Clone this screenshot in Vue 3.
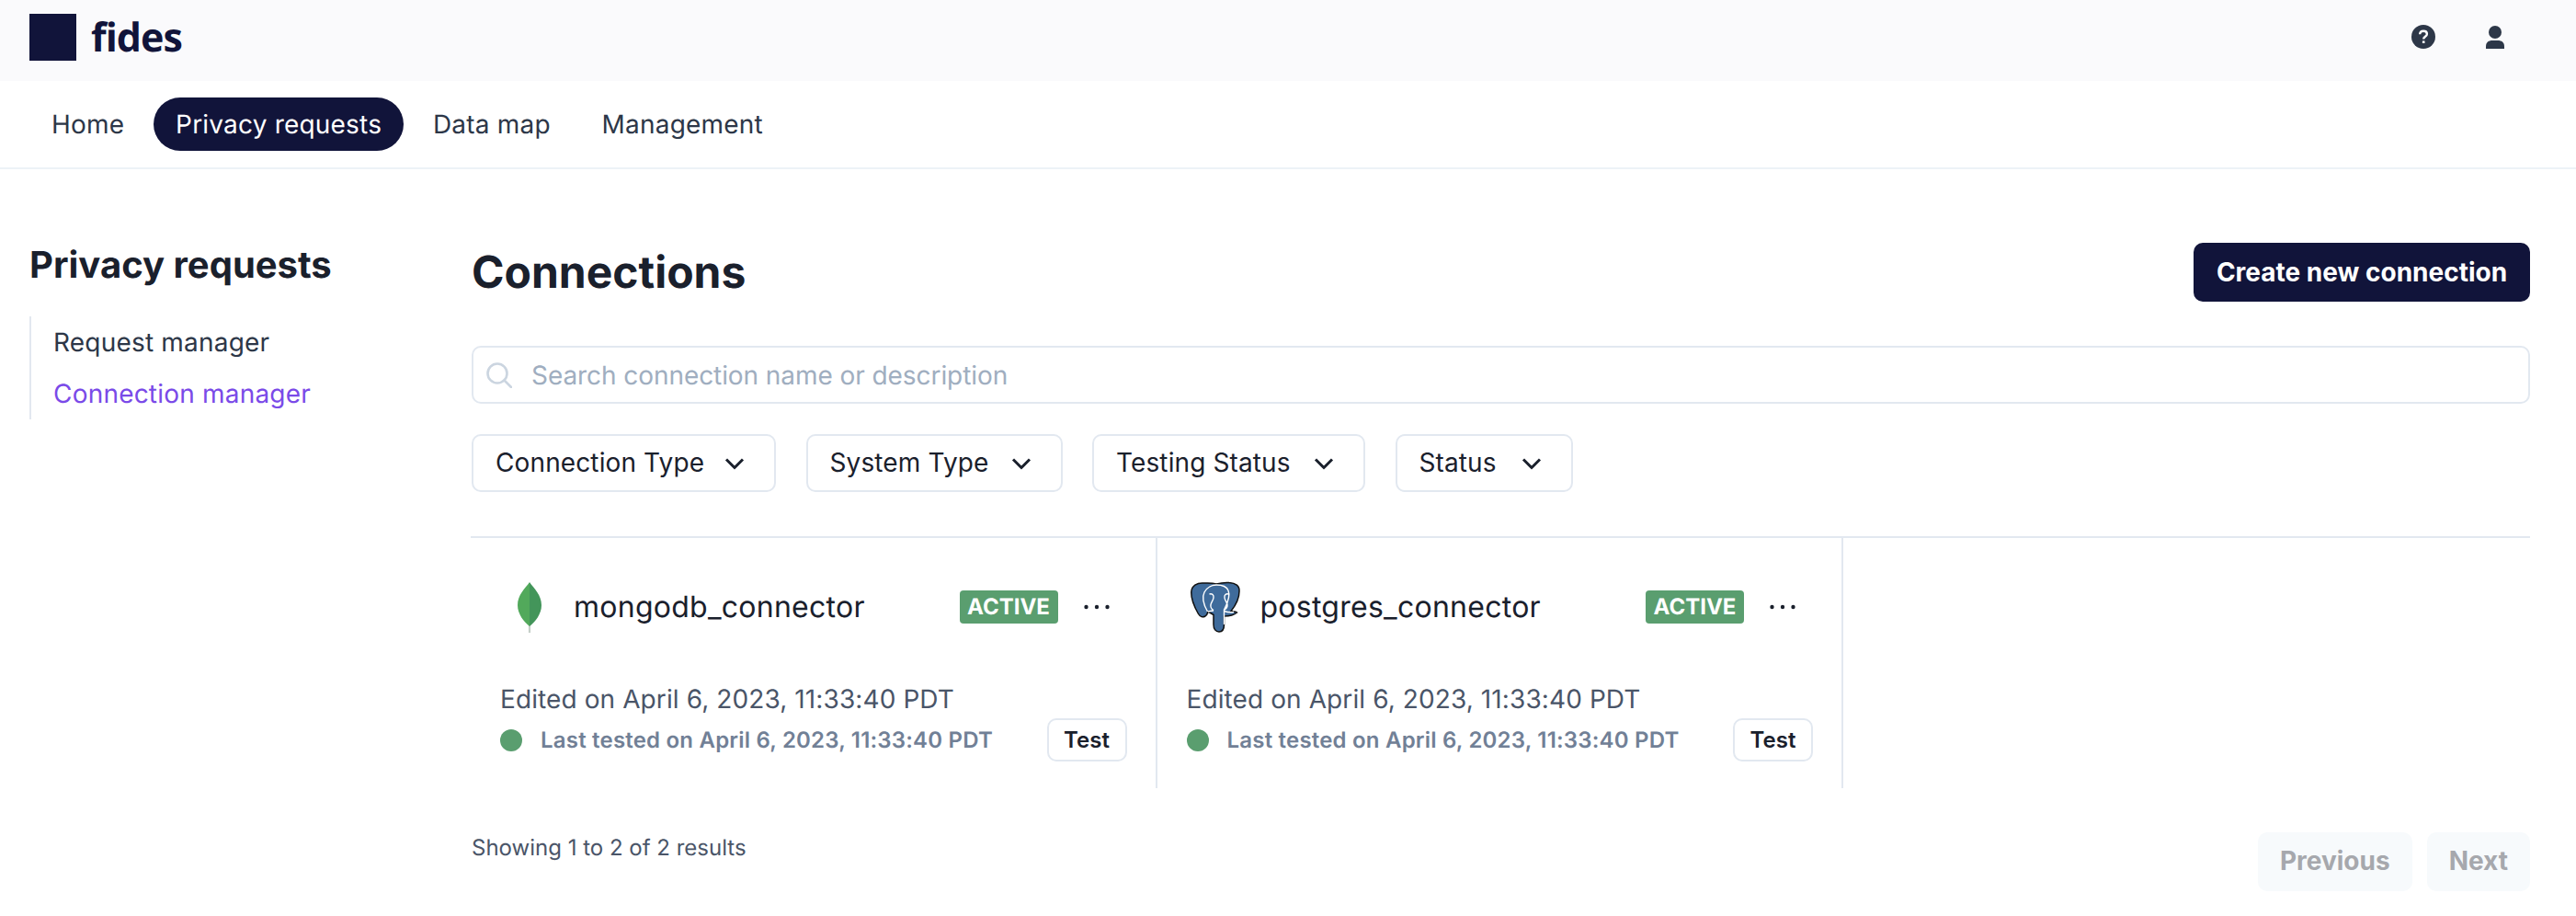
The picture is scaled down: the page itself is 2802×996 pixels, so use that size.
<script setup>
const navItems = [
  { label: 'Home', active: false },
  { label: 'Privacy requests', active: true },
  { label: 'Data map', active: false },
  { label: 'Management', active: false },
]
const filters = [
  { label: 'Connection Type', width: 331 },
  { label: 'System Type', width: 279 },
  { label: 'Testing Status', width: 297 },
  { label: 'Status', width: 193 },
]
const cards = [
  { name: 'mongodb_connector', kind: 'mongo' },
  { name: 'postgres_connector', kind: 'pg' },
]
</script>

<template>
  <div class="page">
    <header class="top">
      <div class="brand">
        <span class="logo"></span>
        <span class="wordmark">fides</span>
      </div>
      <div class="top-icons">
        <svg class="help" viewBox="0 0 26 26" width="26" height="26" aria-hidden="true">
          <circle cx="13" cy="13" r="13" fill="#2d3748" />
          <path d="M9.2 10.2c0-2.2 1.7-3.5 3.9-3.5s3.8 1.2 3.8 3.2c0 2.9-3.7 2.9-3.7 5.6" fill="none" stroke="#fff" stroke-width="2.4" />
          <rect x="11.9" y="17.4" width="2.6" height="2.6" fill="#fff" />
        </svg>
        <svg class="user" viewBox="0 0 20 25" width="20" height="25" aria-hidden="true">
          <circle cx="10" cy="7" r="7" fill="#2d3748" />
          <path d="M0 25v-2.5C0 18 3 16 7 16h6c4 0 7 2 7 6.500V25z" fill="#2d3748" />
        </svg>
      </div>
    </header>

    <nav class="nav">
      <a v-for="item in navItems" :key="item.label" class="nav-item" :class="{ active: item.active }">{{ item.label }}</a>
    </nav>

    <div class="body">
      <aside class="side">
        <h2 class="side-title">Privacy requests</h2>
        <ul class="side-list">
          <li>Request manager</li>
          <li class="current">Connection manager</li>
        </ul>
      </aside>

      <main class="main">
        <div class="head">
          <h1>Connections</h1>
          <button class="primary">Create new connection</button>
        </div>

        <div class="search">
          <svg viewBox="0 0 28 28" width="28" height="28" aria-hidden="true">
            <circle cx="12" cy="12" r="10.500" fill="none" stroke="#cbd5e0" stroke-width="2.600" />
            <path d="M19.500 19.500L27 27" stroke="#cbd5e0" stroke-width="2.600" stroke-linecap="round" />
          </svg>
          <span>Search connection name or description</span>
        </div>

        <div class="filters">
          <button v-for="f in filters" :key="f.label" class="filter" :style="{ width: f.width + 'px' }">
            <span class="filter-label">{{ f.label }}</span>
            <svg viewBox="0 0 22 14" width="22" height="14" aria-hidden="true">
              <path d="M2 2.500l9 9 9-9" fill="none" stroke="#1a202c" stroke-width="3" />
            </svg>
          </button>
        </div>

        <div class="cards">
          <section v-for="c in cards" :key="c.name" class="card">
            <div class="card-top">
              <span class="icon-slot">
                <svg v-if="c.kind === 'mongo'" viewBox="0 0 26 55" width="26" height="55" aria-hidden="true">
                  <path d="M13 46v9" stroke="#c5cfc9" stroke-width="2.200" />
                  <path d="M13 0C8 7 0 14 0 25c0 10 7 18 13 23z" fill="#52a95b" />
                  <path d="M13 0c5 7 13 14 13 25 0 10-7 18-13 23z" fill="#43955a" />
                </svg>
                <svg v-else viewBox="0 0 56 56" width="56" height="56" aria-hidden="true">
                  <path d="M15 2C8 1.500 2 5 1.800 12c-.2 8 4 17 7.700 23.500 2 3.500 5 4 7.500 2.500 1.500-1 2.500-3 3-5l6 3.500V47c0 5 2.500 8 6 8 4 0 5.500-3 5.500-8V38c5 0 10-.5 14-4-2-1.500-4.500-.5-6.500-1.500 4-5 9-13.500 9-21.500C54.500 5 50 2 43 1.500c-5-.5-10 .5-14 1.500C24 1.500 20 2 15 2z" fill="#3f6b9b" stroke="#111" stroke-width="1.500" />
                  <path d="M19.500 33c-4-7-6.500-15-3.500-21 3-6 9-8 13-8 5 0 11 1 13 6 3 7-2 16-4.500 21V47M21.500 14c3-1 5 1 4.500 4-.5 3-2.500 5-3 7.500-.5 2.500.5 4.500 3 6M42.500 14c-3-1-5 1-4.500 4 .5 3 2.500 5 3 7.500.4 2.500-1.500 4.500-3.500 6M37.500 32.500c3 1 7 1.500 10.500 1M20 33c2-.5 4-1 6-1" fill="none" stroke="#fff" stroke-width="1.400" />
                </svg>
              </span>
              <span class="name">{{ c.name }}</span>
              <span class="badge">ACTIVE</span>
              <svg class="dots" viewBox="0 0 28 6" width="28" height="6" aria-hidden="true">
                <circle cx="2.500" cy="3" r="2.200" fill="#1a202c" />
                <circle cx="14" cy="3" r="2.200" fill="#1a202c" />
                <circle cx="25.500" cy="3" r="2.200" fill="#1a202c" />
              </svg>
            </div>
            <p class="edited">Edited on April 6, 2023, 11:33:40 PDT</p>
            <div class="tested">
              <span class="status-dot"></span>
              <span class="tested-text">Last tested on April 6, 2023, 11:33:40 PDT</span>
              <button class="test">Test</button>
            </div>
          </section>
        </div>

        <div class="foot">
          <span class="count">Showing 1 to 2 of 2 results</span>
          <div class="pager">
            <button class="page-btn">Previous</button>
            <button class="page-btn">Next</button>
          </div>
        </div>
      </main>
    </div>
  </div>
</template>

<style>
html, body { margin: 0; background: #fff; overflow: hidden; }
</style>

<style scoped>
.page { width: 2802px; height: 996px; font-family: Inter, "Liberation Sans", sans-serif; color: #1a202c; background: #fff; text-rendering: geometricPrecision; }
.top { height: 88px; box-sizing: border-box; padding: 0 78px 8px 32px; background: #fafafc; display: flex; align-items: center; justify-content: space-between; }
.brand { display: flex; align-items: center; gap: 16px; }
.logo { width: 51px; height: 51px; background: #11143a; display: block; }
.wordmark { font-family: "Open Sans", sans-serif; font-weight: 700; font-size: 43px; line-height: 50px; letter-spacing: -1px; color: #11143a; }
.top-icons { display: flex; align-items: center; gap: 55px; }
.top-icons svg { display: block; }
.nav { height: 96px; box-sizing: border-box; border-bottom: 2px solid #edf2f7; padding: 18px 0 0 32px; display: flex; gap: 7.800px; align-items: flex-start; }
.nav-item { height: 58px; padding: 0 24px; display: flex; align-items: center; border-radius: 29px; font-size: 28px; letter-spacing: .2px; color: #2d3748; }
.nav-item.active { background: #11143a; color: #fff; }
.body { display: grid; grid-template-columns: 481px 1fr; padding: 78px 50px 0 32px; }
.side-title { margin: 0; font-size: 40px; line-height: 52px; font-weight: 700; color: #1a202c; }
.side-list { margin: 30px 0 0; padding: 0 0 0 24px; list-style: none; border-left: 2px solid #e2e8f0; height: 112px; box-sizing: border-box; }
.side-list li { font-size: 28px; line-height: 56px; letter-spacing: .2px; color: #2d3748; }
.side-list li.current { color: #7a4ae8; }
.main { padding-top: 2px; }
.head { display: flex; align-items: center; justify-content: space-between; height: 64px; }
h1 { margin: 0; padding-bottom: 2px; font-size: 48px; font-weight: 700; color: #1a202c; }
button { font-family: inherit; cursor: pointer; }
.primary { height: 64px; width: 366px; border: 0; border-radius: 10px; background: #11143a; color: #fff; font-size: 28px; font-weight: 700; padding: 0 0 1px; }
.search { margin-top: 48px; height: 63px; box-sizing: border-box; border: 2px solid #e2e8f0; border-radius: 10px; padding: 0 0 0 14px; display: flex; align-items: center; gap: 21px; font-size: 28px; letter-spacing: -.07px; color: #a0aec0; }
.filters { margin-top: 33px; display: flex; gap: 32.500px; }
.filter { height: 63px; box-sizing: border-box; background: #fff; border: 2px solid #e2e8f0; border-radius: 10px; padding: 0 32px 2px 24px; display: flex; align-items: center; justify-content: space-between; font-size: 28px; letter-spacing: .12px; color: #1a202c; }
.filter svg { margin-top: 2px; }
.cards { margin-top: 48px; border-top: 2px solid #e2e8f0; display: grid; grid-template-columns: repeat(3, 746.500px); margin-left: -1px; }
.card { height: 272px; box-sizing: border-box; border-right: 2px solid #e2e8f0; padding: 46px 31px 0 32px; }
.card-top { display: flex; align-items: center; height: 58px; }
.icon-slot { width: 63px; margin-right: 17px; display: flex; justify-content: center; }
.icon-slot svg { display: block; }
.name { font-size: 32px; flex: 1; letter-spacing: .26px; padding-bottom: 2px; color: #1a202c; }
.badge { background: #5a9e6f; color: #fff; font-size: 24px; font-weight: 700; height: 36px; width: 107px; box-sizing: border-box; padding-bottom: 1px; display: flex; align-items: center; justify-content: center; border-radius: 4px; margin-right: 28px; }
.dots { margin-right: 19px; }
.edited { margin: 50px 0 0; font-size: 28px; line-height: 42px; letter-spacing: .1px; color: #4a5568; }
.tested { display: flex; align-items: center; margin-top: 0; height: 47px; }
.status-dot { width: 24px; height: 24px; border-radius: 50%; background: #5a9e6f; margin-right: 20px; }
.tested-text { flex: 1; font-size: 24px; font-weight: 600; letter-spacing: .2px; color: #718096; padding-bottom: 1px; }
.test { width: 87px; height: 47px; box-sizing: border-box; background: #fff; border: 2px solid #e2e8f0; border-radius: 10px; font-size: 24px; font-weight: 600; color: #1a202c; padding: 0 0 1px; }
.foot { margin-top: 48px; display: flex; justify-content: space-between; align-items: flex-start; }
.count { font-size: 24px; line-height: 34px; color: #4a5568; }
.pager { display: flex; gap: 16px; }
.page-btn { height: 64px; border: 0; border-radius: 10px; background: #f7fafc; color: #a6a8ad; font-size: 28px; font-weight: 700; padding: 0 24px 3px; }
</style>
